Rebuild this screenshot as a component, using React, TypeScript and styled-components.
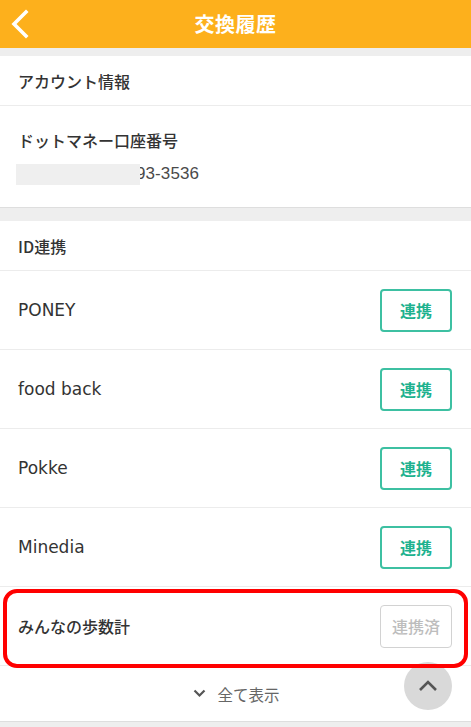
import React from "react";
import styled, { createGlobalStyle } from "styled-components";

const GlobalStyle = createGlobalStyle`
  html, body { margin: 0; padding: 0; background: #fff; }
  body {
    font-family: "Liberation Sans", "Noto Sans CJK JP", sans-serif;
    color: #333;
    overflow: hidden;
  }
  * { box-sizing: border-box; }
`;

const Page = styled.div`
  width: 471px;
  height: 727px;
  overflow: hidden;
  position: relative;
  background: #eeeeee;
  display: flex;
  flex-direction: column;
`;

const Header = styled.header`
  height: 48px;
  flex: none;
  background: #fdb01c;
  display: grid;
  grid-template-columns: 48px 1fr 48px;
  align-items: center;
`;

const BackButton = styled.button`
  border: 0;
  background: transparent;
  padding: 0 0 0 10px;
  height: 48px;
  display: flex;
  align-items: center;
  cursor: pointer;
`;

const Title = styled.h1`
  margin: 0;
  text-align: center;
  color: #fff;
  font-family: "Noto Sans CJK JP", sans-serif;
  font-weight: 700;
  font-size: 20px;
  line-height: 48px;
  letter-spacing: 0.5px;
`;

const Band = styled.div<{ $h: number; $line?: boolean }>`
  flex: none;
  height: ${(p) => p.$h}px;
  background: #eeeeee;
  border-top: ${(p) => (p.$line ? "1px solid #dedede" : "none")};
`;

const Section = styled.section`
  background: #fff;
  flex: none;
`;

const SectionTitle = styled.div`
  height: 50px;
  padding-left: 18px;
  display: flex;
  align-items: center;
  font-family: "Noto Sans CJK JP", sans-serif;
  font-weight: 500;
  font-size: 16px;
  color: #333;
  border-bottom: 1px solid #ececec;
`;

const AccountBlock = styled.div`
  height: 101px;
  padding: 22px 18px 0 18px;
  display: flex;
  flex-direction: column;
  gap: 10px;
`;

const Label = styled.div`
  font-family: "Noto Sans CJK JP", sans-serif;
  font-weight: 500;
  font-size: 16px;
  line-height: 24px;
  color: #333;
`;

const NumberLine = styled.div`
  display: flex;
  align-items: center;
  height: 24px;
  font-size: 17px;
  color: #4a4a4a;
`;

const Redact = styled.span`
  position: relative;
  z-index: 1;
  width: 124px;
  height: 21px;
  margin-left: -2px;
  background: #efefef;
  flex: none;
`;

const NumberText = styled.span`
  margin-left: -4px;
  letter-spacing: 0.1px;
`;

const Row = styled.div`
  position: relative;
  height: 79px;
  padding: 0 19px 0 18px;
  display: flex;
  align-items: center;
  justify-content: space-between;
  border-bottom: 1px solid #ececec;
`;

const Name = styled.span<{ $jp?: boolean }>`
  font-size: ${(p) => (p.$jp ? 16 : 17)}px;
  color: #333;
  font-family: ${(p) =>
    p.$jp ? `"Noto Sans CJK JP", sans-serif` : `"DejaVu Sans", "Noto Sans CJK JP", sans-serif`};
  font-weight: ${(p) => (p.$jp ? 500 : 400)};
`;

const LinkButton = styled.button<{ $done?: boolean }>`
  width: 72px;
  height: 43px;
  border-radius: 4px;
  background: #fff;
  border: ${(p) => (p.$done ? "1.5px solid #d2d2d2" : "2px solid #3dc0a2")};
  color: ${(p) => (p.$done ? "#bdbdbd" : "#1fb28f")};
  font-family: "Noto Sans CJK JP", sans-serif;
  font-weight: ${(p) => (p.$done ? 500 : 700)};
  font-size: 16px;
  padding: 0;
  cursor: pointer;
`;

const Highlight = styled.div`
  position: absolute;
  left: 3px;
  right: 3px;
  top: 2px;
  bottom: -3px;
  border: 4px solid #ff0000;
  border-radius: 14px;
  pointer-events: none;
  z-index: 3;
`;

const ShowAll = styled.button`
  height: 55px;
  width: 100%;
  border: 0;
  background: #fff;
  display: flex;
  align-items: center;
  justify-content: center;
  gap: 11px;
  font-family: "Noto Sans CJK JP", sans-serif;
  font-size: 15.5px;
  color: #666;
  padding: 0 0 0 2px;
  cursor: pointer;
`;

const ScrollTop = styled.button`
  position: absolute;
  left: 404px;
  top: 662px;
  width: 48px;
  height: 48px;
  border-radius: 50%;
  border: 0;
  background: #d9d9d9;
  display: flex;
  align-items: center;
  justify-content: center;
  padding: 0;
  z-index: 2;
`;

const services = ["PONEY", "food back", "Pokke", "Minedia"];

export default function App() {
  return (
    <>
      <GlobalStyle />
      <Page>
        <Header>
          <BackButton aria-label="戻る">
            <svg width="20" height="30" viewBox="0 0 20 30">
              <path d="M16 3 L4 15 L16 27" fill="none" stroke="#fff" strokeWidth="3.6" strokeLinecap="square" />
            </svg>
          </BackButton>
          <Title>交換履歴</Title>
          <span />
        </Header>
        <Band $h={8} />
        <Section>
          <SectionTitle>アカウント情報</SectionTitle>
          <AccountBlock>
            <Label>ドットマネー口座番号</Label>
            <NumberLine>
              <Redact />
              <NumberText>93-3536</NumberText>
            </NumberLine>
          </AccountBlock>
        </Section>
        <Band $h={14} $line />
        <Section>
          <SectionTitle>ID連携</SectionTitle>
          {services.map((s) => (
            <Row key={s}>
              <Name>{s}</Name>
              <LinkButton>連携</LinkButton>
            </Row>
          ))}
          <Row>
            <Name $jp>みんなの歩数計</Name>
            <LinkButton $done>連携済</LinkButton>
            <Highlight />
          </Row>
          <ShowAll>
            <svg width="13" height="9" viewBox="0 0 13 9">
              <path d="M1.5 1.5 L6.5 6.5 L11.5 1.5" fill="none" stroke="#555" strokeWidth="2.2" />
            </svg>
            全て表示
          </ShowAll>
        </Section>
        <Band $h={10} $line />
        <ScrollTop aria-label="トップへ">
          <svg width="20" height="12" viewBox="0 0 20 12">
            <path d="M2 10 L10 2 L18 10" fill="none" stroke="#555" strokeWidth="2.6" />
          </svg>
        </ScrollTop>
      </Page>
    </>
  );
}
